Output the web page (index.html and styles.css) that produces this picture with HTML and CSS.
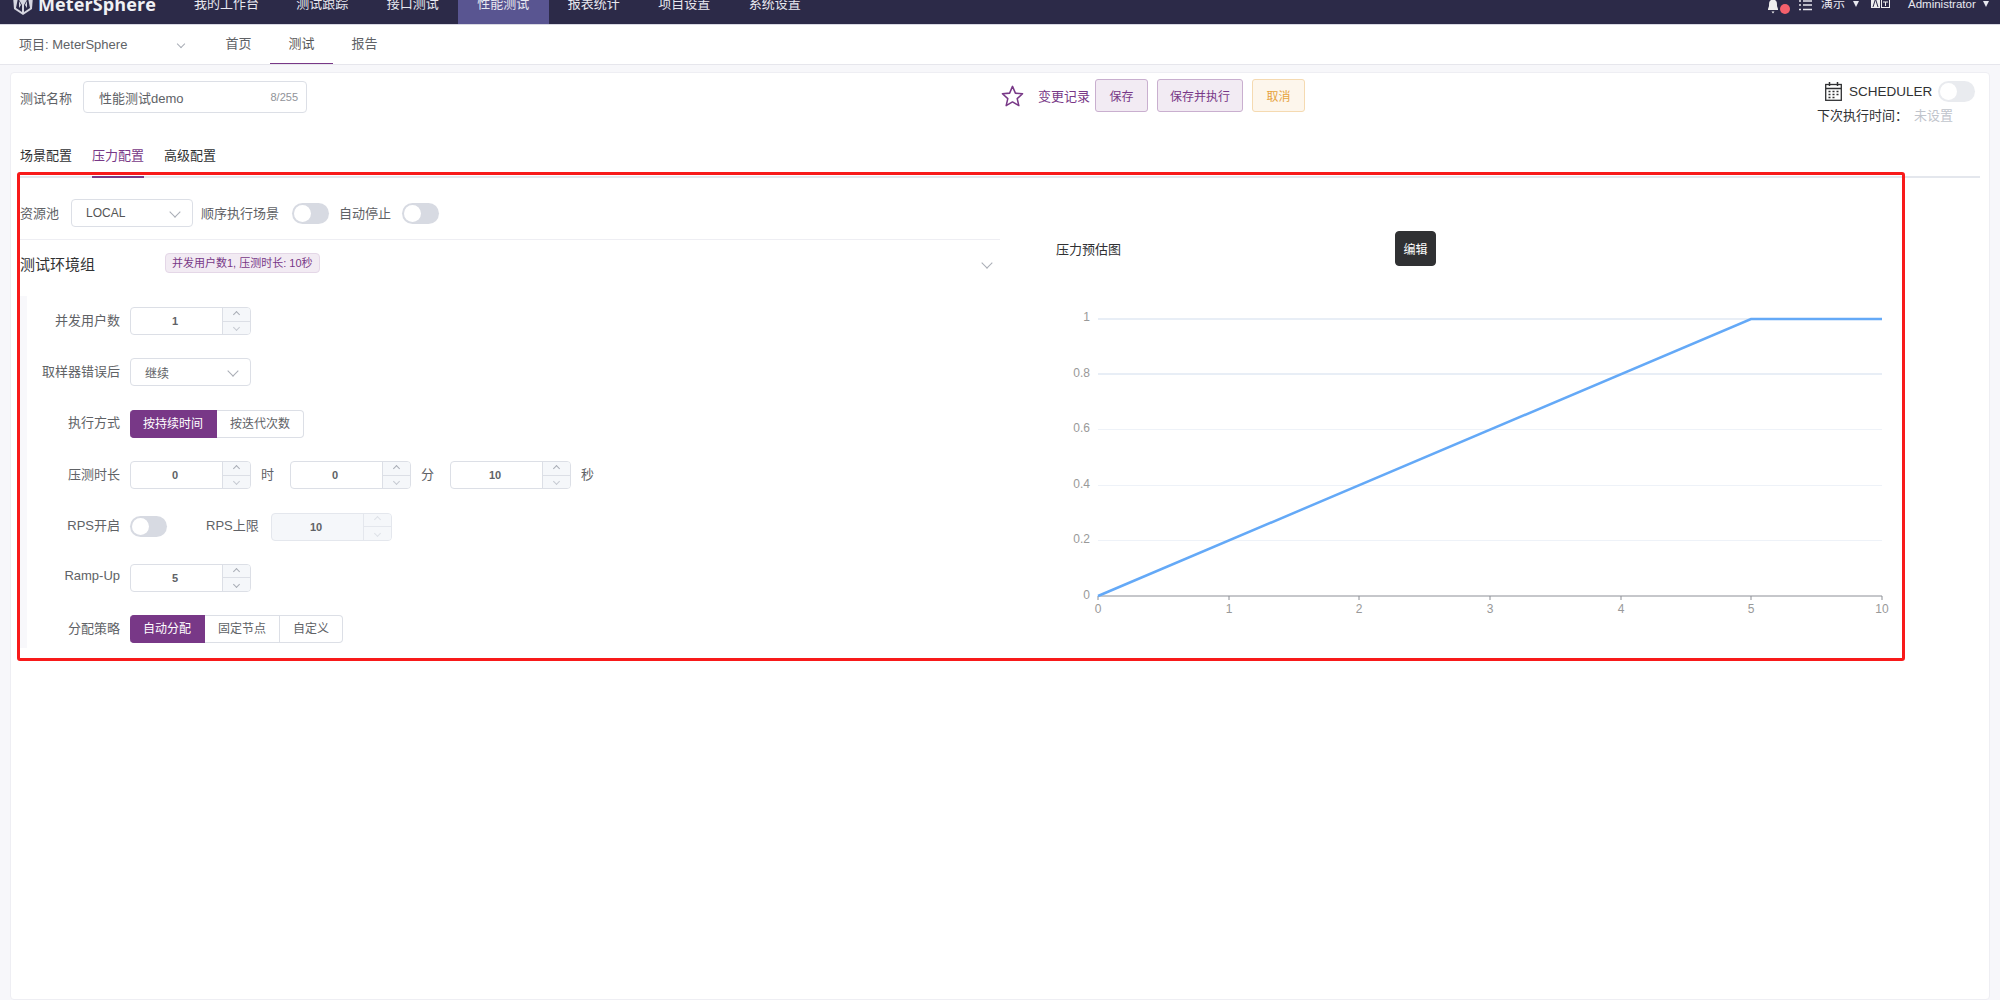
FILE: index.html
```html
<!DOCTYPE html>
<html lang="zh-CN">
<head>
<meta charset="utf-8">
<title>MeterSphere</title>
<link rel="stylesheet" href="styles.css">
</head>
<body>
<header class="topbar">
  <div class="logo">
    <svg class="logo-mark" viewBox="0 0 22 16" aria-hidden="true"><path d="M1-4h20l-1 13-9 6-9-6z" fill="#d6d6e0"/><path d="M6-2l4 7v7L4 8zM16-2l-4 7v7l6-4z" fill="#2c2a48"/><path d="M7 1l2 4-2 3zM15 1l-2 4 2 3z" fill="#d6d6e0"/></svg>
    <span class="logo-text">MeterSphere</span>
  </div>
  <nav class="mainnav">
    <a class="mainnav-item">我的工作台</a>
    <a class="mainnav-item">测试跟踪</a>
    <a class="mainnav-item">接口测试</a>
    <a class="mainnav-item is-active">性能测试</a>
    <a class="mainnav-item">报表统计</a>
    <a class="mainnav-item">项目设置</a>
    <a class="mainnav-item">系统设置</a>
  </nav>
  <div class="topright">
    <span class="bell">
      <svg class="bell-icon" viewBox="0 0 10 14" aria-hidden="true"><path d="M3-2h4v2c2 1 2 3 2 6l1 3v1H0V9l1-3c0-3 0-5 2-6zM3.500 11.500h3L5 13.500z" fill="#eee"/></svg>
      <i class="bell-dot"></i>
    </span>
    <svg class="list-icon" viewBox="0 0 13 11" aria-hidden="true"><path d="M4 1h9M4 5h9M4 9.500h9" stroke="#e6e6ee" stroke-width="1.500"/><path d="M0 1h2M0 5h2M0 9.500h2" stroke="#e6e6ee" stroke-width="1.500"/></svg>
    <span class="top-text top-demo">演示</span>
    <i class="caret"></i>
    <svg class="lang-icon" viewBox="0 0 19 9" aria-hidden="true"><rect x="0" y="-3" width="9" height="11" fill="#eee"/><path d="M2 7l2.500-8L7 7" stroke="#2c2a48" fill="none"/><rect x="10.500" y="-2.500" width="8" height="10" fill="none" stroke="#eee"/><path d="M12 2h5M14.500 2v4" stroke="#eee"/></svg>
    <span class="top-text top-admin">Administrator</span>
    <i class="caret caret-last"></i>
  </div>
</header>

<div class="subnav">
  <span class="project">项目: MeterSphere</span>
  <i class="chev chev-down chev-project"></i>
  <a class="subnav-item">首页</a>
  <a class="subnav-item is-active">测试</a>
  <a class="subnav-item">报告</a>
</div>

<main class="card">
  <section class="head">
    <div class="head-name">
      <label class="name-label">测试名称</label>
      <div class="name-input"><span class="name-value">性能测试demo</span><span class="name-count">8/255</span></div>
    </div>
    <div class="head-actions">
      <svg class="star" viewBox="0 0 24 24" aria-hidden="true"><path d="M12 2l3 7 7.500.7-5.600 5 1.700 7.300L12 18.200 5.400 22l1.700-7.300-5.600-5L9 9z" fill="none" stroke="#783887" stroke-width="1.600" stroke-linejoin="round"/></svg>
      <a class="history">变更记录</a>
      <button class="btn btn-save">保存</button>
      <button class="btn btn-run">保存并执行</button>
      <button class="btn btn-cancel">取消</button>
    </div>
    <div class="head-schedule">
      <div class="sched-row">
        <svg class="calendar" viewBox="0 0 17 19" aria-hidden="true"><rect x=".7" y="2.500" width="15.600" height="15.800" fill="none" stroke="#303133" stroke-width="1.300"/><path d="M1 6.500h15" stroke="#303133" stroke-width="1.500"/><path d="M4.500 0v4M12.500 0v4" stroke="#303133" stroke-width="1.500"/><path d="M3.500 9.500h2M7.500 9.500h2M11.500 9.500h2M3.500 12.500h2M7.500 12.500h2M11.500 12.500h2M3.500 15.500h2M7.500 15.500h2" stroke="#303133" stroke-width="1.500"/></svg>
        <span class="sched-text">SCHEDULER</span>
        <span class="toggle toggle-disabled"></span>
      </div>
      <div class="next-row"><span class="next-label">下次执行时间：</span><span class="next-value">未设置</span></div>
    </div>
  </section>

  <div class="tabs">
    <a class="tab">场景配置</a>
    <a class="tab is-active">压力配置</a>
    <a class="tab">高级配置</a>
  </div>

  <section class="panel">
    <div class="config">
      <div class="pool-row">
        <label class="lbl">资源池</label>
        <div class="select select-pool"><span class="select-text select-local">LOCAL</span><i class="chev chev-down"></i></div>
        <label class="lbl lbl-seq">顺序执行场景</label>
        <span class="toggle toggle-seq"></span>
        <label class="lbl lbl-stop">自动停止</label>
        <span class="toggle toggle-stop"></span>
      </div>
      <div class="group-head">
        <span class="group-title">测试环境组</span>
        <span class="tag">并发用户数1, 压测时长: 10秒</span>
        <i class="chev chev-down chev-group"></i>
      </div>
      <div class="form">
        <div class="form-row">
          <label class="form-label">并发用户数</label>
          <div class="num"><span class="num-value">1</span><span class="num-ctrl"><b class="num-btn"><i class="chev chev-up"></i></b><b class="num-btn"><i class="chev chev-down chev-muted"></i></b></span></div>
        </div>
        <div class="form-row">
          <label class="form-label">取样器错误后</label>
          <div class="select select-form"><span class="select-text">继续</span><i class="chev chev-down"></i></div>
        </div>
        <div class="form-row">
          <label class="form-label">执行方式</label>
          <div class="seg"><span class="seg-item is-on">按持续时间</span><span class="seg-item">按迭代次数</span></div>
        </div>
        <div class="form-row">
          <label class="form-label">压测时长</label>
          <div class="num"><span class="num-value">0</span><span class="num-ctrl"><b class="num-btn"><i class="chev chev-up"></i></b><b class="num-btn"><i class="chev chev-down chev-muted"></i></b></span></div>
          <span class="unit">时</span>
          <div class="num"><span class="num-value">0</span><span class="num-ctrl"><b class="num-btn"><i class="chev chev-up"></i></b><b class="num-btn"><i class="chev chev-down chev-muted"></i></b></span></div>
          <span class="unit">分</span>
          <div class="num"><span class="num-value">10</span><span class="num-ctrl"><b class="num-btn"><i class="chev chev-up"></i></b><b class="num-btn"><i class="chev chev-down chev-muted"></i></b></span></div>
          <span class="unit">秒</span>
        </div>
        <div class="form-row">
          <label class="form-label">RPS开启</label>
          <span class="toggle"></span>
          <label class="lbl lbl-rps">RPS上限</label>
          <div class="num num-disabled"><span class="num-value">10</span><span class="num-ctrl"><b class="num-btn"><i class="chev chev-up chev-faint"></i></b><b class="num-btn"><i class="chev chev-down chev-faint"></i></b></span></div>
        </div>
        <div class="form-row">
          <label class="form-label">Ramp-Up</label>
          <div class="num"><span class="num-value">5</span><span class="num-ctrl"><b class="num-btn"><i class="chev chev-up"></i></b><b class="num-btn"><i class="chev chev-down"></i></b></span></div>
        </div>
        <div class="form-row">
          <label class="form-label">分配策略</label>
          <div class="seg"><span class="seg-item is-on">自动分配</span><span class="seg-item">固定节点</span><span class="seg-item">自定义</span></div>
        </div>
      </div>
    </div>

    <div class="estimate">
      <div class="estimate-head">
        <span class="estimate-title">压力预估图</span>
        <button class="btn-edit">编辑</button>
      </div>
      <svg class="chart" viewBox="1040 300 860 330" aria-label="压力预估图">
        <g class="grid">
          <path class="grid-strong" d="M1098 319H1882M1098 374H1882"/>
          <path d="M1098 429.500H1882M1098 485.500H1882M1098 540.500H1882"/>
        </g>
        <path class="axis" d="M1098 596H1882M1098 596v4M1229 596v4M1359 596v4M1490 596v4M1621 596v4M1751 596v4M1882 596v4"/>
        <polyline class="series" points="1098,596 1751,319 1882,319"/>
        <g class="ylabels">
          <text x="1090" y="321">1</text>
          <text x="1090" y="377">0.8</text>
          <text x="1090" y="432">0.6</text>
          <text x="1090" y="488">0.4</text>
          <text x="1090" y="543">0.2</text>
          <text x="1090" y="599">0</text>
        </g>
        <g class="xlabels">
          <text x="1098" y="613">0</text>
          <text x="1229" y="613">1</text>
          <text x="1359" y="613">2</text>
          <text x="1490" y="613">3</text>
          <text x="1621" y="613">4</text>
          <text x="1751" y="613">5</text>
          <text x="1882" y="613">10</text>
        </g>
      </svg>
    </div>
  </section>
</main>

<div class="highlight"></div>
</body>
</html>
```
FILE: styles.css
```css
* { box-sizing: border-box; }
html, body { height: 100%; }
body {
  margin: 0;
  height: 1000px;
  overflow: hidden;
  display: flex;
  flex-direction: column;
  background: #f7f7fa;
  color: #606266;
  font-family: "Liberation Sans", "Noto Sans CJK SC", sans-serif;
  font-size: 13px;
}
i, b { display: block; font-style: normal; font-weight: normal; }
button { font-family: inherit; cursor: pointer; }

/* top bar */
.topbar {
  flex: none;
  height: 25px;
  display: flex;
  background: #2c2a48;
  border-bottom: 1px solid #d8d8e2;
  color: #e8e8f0;
}
.logo { width: 175px; display: flex; padding-left: 12px; }
.logo-mark { width: 22px; height: 16px; flex: none; }
.logo-text {
  margin-left: 4px;
  font-family: "Open Sans", sans-serif;
  font-weight: 700;
  font-size: 18px;
  line-height: 9px;
  letter-spacing: .1px;
  color: #f0f0f5;
}
.mainnav { display: flex; }
.mainnav-item {
  padding: 0 19px;
  height: 24px;
  line-height: 8px;
  white-space: nowrap;
  width: 90.500px;
  text-align: center;
}
.mainnav-item:first-child { width: 103px; margin-right: -1px; }
.mainnav-item.is-active { background: #595591; }
.topright { margin-left: auto; display: flex; align-items: flex-start; }
.bell { width: 24px; position: relative; height: 15px; margin-right: 7px; }
.bell-icon { display: block; width: 10px; height: 14px; }
.bell-dot {
  position: absolute;
  left: 12px;
  top: 4px;
  width: 10px;
  height: 10px;
  border-radius: 50%;
  background: #f4606c;
}
.list-icon { width: 13px; height: 11px; margin-right: 9px; }
.top-text { font-size: 12px; line-height: 8px; white-space: nowrap; }
.top-demo { width: 32px; }
.top-admin { width: 75px; font-size: 11.500px; }
.caret {
  width: 0;
  height: 0;
  margin-top: 1px;
  margin-right: 12px;
  border-left: 3.500px solid transparent;
  border-right: 3.500px solid transparent;
  border-top: 6px solid #e8e8f0;
}
.caret-last { margin-right: 11px; }
.lang-icon { width: 19px; height: 9px; margin-right: 18px; }

/* sub nav */
.subnav {
  flex: none;
  height: 40px;
  display: flex;
  align-items: flex-start;
  background: #fff;
  border-bottom: 1px solid #e6e6ec;
  padding-left: 19px;
}
.project { width: 159px; line-height: 40px; white-space: nowrap; }
.chev-project { margin: 16px 23px 0 0; }
.subnav-item {
  width: 63px;
  height: 39px;
  line-height: 37px;
  text-align: center;
}
.subnav-item.is-active { color: #555; border-bottom: 1px solid #783887; }

/* chevrons */
.chev {
  width: 6px;
  height: 6px;
  flex: none;
  border-right: 1px solid #a9adb6;
  border-bottom: 1px solid #a9adb6;
}
.chev-down { transform: rotate(45deg); }
.chev-up { transform: rotate(225deg); }
.chev-muted { border-color: #c6cad2; }
.chev-faint { border-color: #dfe2e8; }

/* card */
.card {
  flex: 1;
  margin: 7px 10px 0;
  background: #fff;
  border: 1px solid #eeeef3;
  border-radius: 4px;
}
.head {
  height: 64px;
  display: flex;
  align-items: flex-start;
  padding: 6px 14px 0 9px;
}
.head-name { display: flex; align-items: center; margin-top: 2px; }
.name-label { width: 63px; white-space: nowrap; }
.name-input {
  width: 224px;
  height: 32px;
  display: flex;
  align-items: center;
  justify-content: space-between;
  padding: 0 8px 0 15px;
  border: 1px solid #dcdfe6;
  border-radius: 4px;
}
.name-count { font-size: 11px; color: #909399; }
.head-actions { display: flex; align-items: center; margin-left: 694px; }
.star { width: 23px; height: 24px; margin-right: 14px; }
.history {
  width: 57px;
  color: #783887;
  white-space: nowrap;
}
.btn {
  height: 33px;
  width: 53px;
  margin-right: 9px;
  padding: 0;
  font-size: 12px;
  border-radius: 3px;
  border: 1px solid #c9afcf;
  background: #f2ebf3;
  color: #783887;
}
.btn-run { width: 86px; }
.btn-cancel {
  margin-right: 0;
  border-color: #f5dab1;
  background: #fdf6ec;
  color: #e6a23c;
}
.head-schedule { margin-left: auto; width: 158px; }
.sched-row { display: flex; align-items: center; height: 24px; padding-left: 8px; }
.calendar { width: 17px; height: 19px; flex: none; }
.sched-text {
  margin-left: 7px;
  width: 89px;
  font-size: 13.500px;
  color: #303133;
  white-space: nowrap;
}
.next-row { margin-top: 1px; line-height: 24px; white-space: nowrap; display: flex; }
.next-label { color: #303133; width: 97px; }
.next-value { color: #c0c4cc; }

/* toggles */
.toggle {
  display: block;
  flex: none;
  position: relative;
  width: 37px;
  height: 21px;
  border-radius: 11px;
  background: #d7dae2;
}
.toggle::after {
  content: "";
  position: absolute;
  left: 2px;
  top: 2px;
  width: 17px;
  height: 17px;
  border-radius: 50%;
  background: #fff;
}
.toggle-disabled { background: #e9ebef; }

/* tabs */
.tabs {
  height: 41px;
  margin: 0 9px;
  display: flex;
  gap: 20px;
  border-bottom: 2px solid #e4e7ed;
}
.tab {
  height: 41px;
  line-height: 38px;
  color: #303133;
  white-space: nowrap;
}
.tab.is-active { color: #783887; border-bottom: 2px solid #783887; }

/* panel */
.panel { display: flex; padding-left: 9px; }
.config { width: 980px; flex: none; }
.pool-row {
  display: flex;
  align-items: center;
  height: 62px;
  padding: 21px 0 12px;
  border-bottom: 1px solid #eeeef3;
}
.lbl { white-space: nowrap; padding-bottom: 2px; }
.select {
  display: flex;
  align-items: center;
  justify-content: space-between;
  height: 28px;
  border: 1px solid #dcdfe6;
  border-radius: 4px;
  padding: 0 13px 0 14px;
  background: #fff;
}
.select .chev { width: 8px; height: 8px; margin-top: -2px; }
.select-pool { width: 122px; margin-left: 12px; }
.select-local { font-size: 11px; color: #555; }
.select-form { width: 121px; }
.select-text { font-size: 12px; }
.lbl-seq { margin-left: 8px; width: 91px; }
.lbl-stop { margin-left: 10px; width: 63px; }

.group-head {
  height: 56px;
  display: flex;
  align-items: center;
  padding-bottom: 10px;
}
.group-title { width: 145px; color: #303133; font-size: 15px; white-space: nowrap; }
.tag {
  height: 20px;
  line-height: 18px;
  padding: 0 6px;
  font-size: 11px;
  color: #783887;
  background: #f2ebf3;
  border: 1px solid #e4d7e7;
  border-radius: 4px;
  white-space: nowrap;
}
.chev-group { margin-left: auto; margin-right: 9px; width: 8px; height: 8px; }

.form {
  display: flex;
  flex-direction: column;
  gap: 23.400px;
  padding: 11px 0 5px;
  border-left: 7px solid #f8f8fb;
}
.form-row { display: flex; align-items: center; height: 28px; }
.form-label {
  width: 93px;
  margin-right: 10px;
  padding-bottom: 4px;
  text-align: right;
  white-space: nowrap;
}
.num {
  width: 121px;
  height: 28px;
  flex: none;
  display: flex;
  border: 1px solid #dcdfe6;
  border-radius: 4px;
  overflow: hidden;
  background: #fff;
}
.num-value {
  flex: 1;
  padding-right: 3px;
  text-align: center;
  line-height: 26px;
  font-size: 11px;
  font-weight: 700;
  color: #606266;
}
.num-ctrl {
  width: 28px;
  display: flex;
  flex-direction: column;
  background: #f5f7fa;
  border-left: 1px solid #dcdfe6;
}
.num-btn {
  flex: 1;
  display: flex;
  align-items: center;
  justify-content: center;
}
.num-btn:first-child { border-bottom: 1px solid #dcdfe6; }
.num-btn .chev { width: 5px; height: 5px; }
.num-disabled { background: #f5f7fa; border-color: #e4e7ed; }
.num-disabled .num-ctrl { border-color: #e4e7ed; }
.num-disabled .num-btn { border-color: #e4e7ed; }
.unit { margin: 0 16px 0 10px; padding-bottom: 4px; width: 13px; color: #606266; }
.lbl-rps { margin-left: 39px; width: 65px; padding-bottom: 4px; }

.seg { display: flex; }
.seg-item {
  height: 28px;
  line-height: 26px;
  padding: 0 13px;
  font-size: 12px;
  border: 1px solid #dcdfe6;
  border-left-width: 0;
  background: #fff;
}
.seg-item:last-child { border-radius: 0 4px 4px 0; }
.seg-item.is-on {
  background: #783887;
  color: #fff;
  border-color: #783887;
  border-radius: 4px 0 0 4px;
}

/* chart */
.estimate { flex: 1; min-width: 0; }
.estimate-head {
  display: flex;
  align-items: center;
  margin: 53px 0 0 56px;
  height: 35px;
}
.estimate-title { width: 339px; color: #303133; }
.btn-edit {
  width: 41px;
  height: 35px;
  padding: 0;
  font-size: 12px;
  color: #fff;
  background: #303133;
  border: 1px solid #303133;
  border-radius: 4px;
}
.chart { display: block; width: 860px; height: 330px; margin: 34px 0 0 40px; }
.grid path { fill: none; stroke: #eef2f8; stroke-width: 1; }
.grid .grid-strong { stroke: #e8eef6; stroke-width: 2; }
.axis { fill: none; stroke: #8c8f96; stroke-width: 1; }
.series { fill: none; stroke: #64a9f7; stroke-width: 2.500; }
.ylabels text, .xlabels text {
  font-family: "Liberation Sans", sans-serif;
  font-size: 12px;
  fill: #999;
}
.ylabels text { text-anchor: end; }
.xlabels text { text-anchor: middle; }

/* red annotation frame over the page */
.highlight {
  position: absolute;
  left: 17px;
  top: 172px;
  width: 1888px;
  height: 489px;
  border: 3px solid #f81a1a;
  border-radius: 3px;
  pointer-events: none;
}
```
